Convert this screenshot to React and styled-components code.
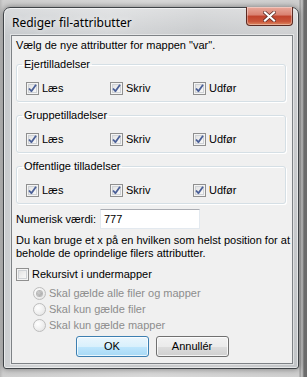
import React from "react";
import styled, { createGlobalStyle } from "styled-components";

const Global = createGlobalStyle`
  html, body { margin: 0; padding: 0; }
  body {
    width: 307px; height: 377px; overflow: hidden;
    background: linear-gradient(to right, #b9b9b9 0, #cfcfcf 3px, #d9d9d9 150px, #cfcfcf 299px, #9a9a9a 300px, #c8c8c8 302px, #6e6e6e 304px, #6a6a6a 307px);
    font-family: "Liberation Sans", Arial, sans-serif;
  }
  #root { padding-top: 7px; padding-left: 3px; }
`;

const Window = styled.div`
  box-sizing: border-box;
  width: 296px;
  height: 362px;
  border: 1px solid #3f4347;
  border-radius: 7px 7px 3px 3px;
  background:
    linear-gradient(to bottom, rgba(255,255,255,0.35) 0, rgba(255,255,255,0) 28px),
    linear-gradient(100deg, #c6c9cc 0%, #d3d5d7 30%, #c8cacc 55%, #cecfd1 80%, #c2c5c8 100%);
  box-shadow: 0 0 6px rgba(0,0,0,0.45), inset 0 0 0 1px rgba(255,255,255,0.55);
  padding: 0 5px 5px 7px;
  display: flex;
  flex-direction: column;
`;

const TitleBar = styled.div`
  height: 27px;
  display: flex;
  justify-content: space-between;
  align-items: flex-start;
  flex: none;
`;

const Title = styled.div`
  margin: 7px 0 0 1px;
  font-family: "Noto Sans", "Open Sans", sans-serif;
  font-size: 12px;
  line-height: 16px;
  color: #000;
  text-shadow: 0 0 6px rgba(255,255,255,0.9);
`;

const CloseButton = styled.div`
  box-sizing: border-box;
  width: 47px;
  height: 19px;
  margin-top: -1px;
  border: 1px solid #5b2a22;
  border-top: none;
  border-radius: 0 0 4px 4px;
  background: linear-gradient(to bottom, #e9a99b 0%, #d98170 45%, #c0432c 50%, #c9553a 80%, #de8a62 100%);
  box-shadow: inset 0 0 0 1px rgba(255,255,255,0.35);
  display: flex;
  align-items: center;
  justify-content: center;
`;

const Client = styled.div`
  flex: 1;
  box-sizing: border-box;
  border: 1px solid #7e8286;
  box-shadow: 0 0 0 1px rgba(255,255,255,0.45);
  background: #f0f0f0;
  padding: 3px 6px 6px 4px;
  display: flex;
  flex-direction: column;
  font-size: 11px;
  line-height: 13px;
  color: #000;
`;

const Text = styled.div`
  margin-top: ${(p) => p.$mt || 0}px;
  margin-right: -5px;
`;

const Group = styled.fieldset`
  margin: ${(p) => p.$mt}px 0 0 0;
  border: 1px solid #d5dfe5;
  border-radius: 3px;
  box-shadow: inset 1px 1px 0 #fff, 1px 1px 0 #fff;
  padding: 0 8px 6px 9px;
  min-width: 0;
`;

const Legend = styled.legend`
  padding: 0 2px;
  margin-left: -4px;
  line-height: 13px;
  font-size: 11px;
`;

const CheckGrid = styled.div`
  margin-top: 11px;
  display: grid;
  grid-template-columns: 84px 83px auto;
`;

const Option = styled.label`
  display: flex;
  align-items: center;
  gap: ${(p) => p.$gap ?? 3}px;
  height: 13px;
  margin-top: ${(p) => p.$mt || 0}px;
  margin-left: ${(p) => p.$ml || 0}px;
  color: ${(p) => (p.$disabled ? "#8d8d8d" : "#000")};
  white-space: nowrap;
`;

const Box = styled.span`
  box-sizing: border-box;
  width: 13px;
  height: 13px;
  flex: none;
  border: 1px solid #8f8f8f;
  background: linear-gradient(135deg, #dcdcdc 0%, #f2f2f2 60%, #fbfbfb 100%);
  box-shadow: inset 0 0 0 1px #f4f4f4, inset 0 0 0 2px #cfd2d6;
  display: flex;
  align-items: center;
  justify-content: center;
`;

const Radio = styled.span`
  box-sizing: border-box;
  width: 13px;
  height: 13px;
  flex: none;
  border-radius: 50%;
  border: 1px solid #bdbdbd;
  background: radial-gradient(circle at 35% 35%, #ffffff 0%, #f0f0f0 50%, #dedede 100%);
  display: flex;
  align-items: center;
  justify-content: center;
  &::after {
    content: "";
    display: ${(p) => (p.$checked ? "block" : "none")};
    width: 5px;
    height: 5px;
    border-radius: 50%;
    background: radial-gradient(circle at 40% 40%, #d0d0d0 0%, #9a9a9a 100%);
    box-shadow: 0 0 0 1px #b8b8b8;
  }
`;

const Row = styled.div`
  display: grid;
  grid-template-columns: 84px 100px;
  align-items: center;
  margin-top: 5px;
`;

const Input = styled.div`
  box-sizing: border-box;
  height: 20px;
  border: 1px solid #e3e9ef;
  border-top-color: #abadb3;
  background: #fff;
  padding: 0 0 0 3px;
  display: flex;
  align-items: center;
`;

const Buttons = styled.div`
  margin-top: 4px;
  display: flex;
  justify-content: center;
  gap: 7px;
  padding-left: 2px;
`;

const Button = styled.div`
  box-sizing: border-box;
  width: 73px;
  height: 21px;
  border-radius: 3px;
  border: 1px solid ${(p) => (p.$primary ? "#3c7fb1" : "#707070")};
  background: ${(p) =>
    p.$primary
      ? "linear-gradient(to bottom, #eaf6fd 0%, #d9f0fc 50%, #bee6fd 51%, #a7d9f5 100%)"
      : "linear-gradient(to bottom, #f2f2f2 0%, #ebebeb 50%, #dddddd 51%, #cfcfcf 100%)"};
  box-shadow: inset 0 0 0 1px rgba(255,255,255,0.75);
  display: flex;
  align-items: center;
  justify-content: center;
`;

const Check = () => (
  <svg width="9" height="9" viewBox="0 0 9 9">
    <path d="M1 4.5 L3.4 7.2 L8 0.8" fill="none" stroke="#4a5f97" strokeWidth="1.8" strokeLinejoin="round" />
  </svg>
);

const CheckBox = ({ checked, children }) => (
  <Option>
    <Box>{checked && <Check />}</Box>
    {children}
  </Option>
);

const PermGroup = ({ title, mt }) => (
  <Group $mt={mt}>
    <Legend>{title}</Legend>
    <CheckGrid>
      <CheckBox checked>Læs</CheckBox>
      <CheckBox checked>Skriv</CheckBox>
      <CheckBox checked>Udfør</CheckBox>
    </CheckGrid>
  </Group>
);

export default function App() {
  return (
    <>
      <Global />
      <Window>
        <TitleBar>
          <Title>Rediger fil-attributter</Title>
          <CloseButton>
            <svg width="13" height="11" viewBox="0 0 13 11">
              <path d="M2 1.5 L11 9.5 M11 1.5 L2 9.5" stroke="#5a2a24" strokeWidth="3.6" strokeLinecap="square" />
              <path d="M2 1.5 L11 9.5 M11 1.5 L2 9.5" stroke="#ffffff" strokeWidth="2.2" strokeLinecap="square" />
            </svg>
          </CloseButton>
        </TitleBar>
        <Client>
          <Text>Vælg de nye attributter for mappen "var".</Text>
          <PermGroup title="Ejertilladelser" mt={6} />
          <PermGroup title="Gruppetilladelser" mt={7} />
          <PermGroup title="Offentlige tilladelser" mt={7} />
          <Row>
            <span>Numerisk værdi:</span>
            <Input>777</Input>
          </Row>
          <Text $mt={5}>
            Du kan bruge et x på en hvilken som helst position for at beholde de oprindelige filers attributter.
          </Text>
          <Option $mt={8}>
            <Box />
            Rekursivt i undermapper
          </Option>
          <Option $mt={6} $ml={17} $disabled>
            <Radio $checked />
            Skal gælde alle filer og mapper
          </Option>
          <Option $mt={3} $ml={17} $disabled>
            <Radio />
            Skal kun gælde filer
          </Option>
          <Option $mt={3} $ml={17} $disabled>
            <Radio />
            Skal kun gælde mapper
          </Option>
          <Buttons>
            <Button $primary>OK</Button>
            <Button>Annullér</Button>
          </Buttons>
        </Client>
      </Window>
    </>
  );
}
